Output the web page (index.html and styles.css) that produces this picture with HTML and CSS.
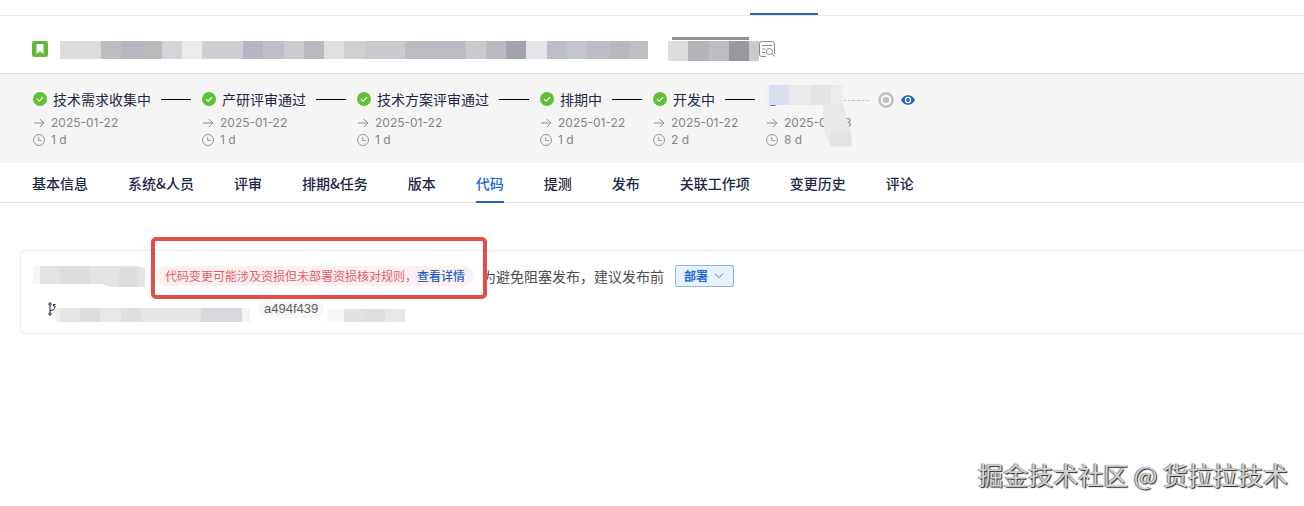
FILE: index.html
```html
<!DOCTYPE html>
<html lang="zh-CN">
  <head>
    <meta charset="UTF-8" />
    <meta name="viewport" content="width=device-width, initial-scale=1.0" />
    <title>代码</title>
    <link rel="stylesheet" href="styles.css">
  </head>
  <body>
    <svg class="sprite" aria-hidden="true">
      <symbol id="check" viewBox="0 0 14 14">
        <circle cx="7" cy="7" r="7" fill="#5fbf35" />
        <path d="M4 7.1l2.2 2.1L10 5.2" fill="none" stroke="#fff" stroke-width="1.2" />
      </symbol>
      <symbol id="arrow" viewBox="0 0 12 12">
        <path d="M1 6h9.6M6.8 1.9L10.8 6l-4 4.1" fill="none" stroke="#8c8c8c" />
      </symbol>
      <symbol id="clock" viewBox="0 0 12 12">
        <circle cx="6" cy="6" r="5.5" fill="none" stroke="#8c8c8c" stroke-width="0.9" />
        <path d="M5.7 3v3.5h3" fill="none" stroke="#8c8c8c" stroke-width="0.9" />
      </symbol>
    </svg>

    <div class="topbar"><span class="topbar-active"></span></div>

    <header class="header">
      <svg class="story-icon" viewBox="0 0 16 16">
        <rect width="16" height="16" rx="2" fill="#65b83c" />
        <path d="M4.5 3h7v10L8 10.6 4.5 13z" fill="#fff" />
      </svg>
      <div class="mosaic-title"></div>
      <div class="mosaic-status"></div>
      <svg class="search-icon" viewBox="0 0 16 16" fill="none" stroke="#8c8c8c">
        <path d="M7 15.500H2.500a2 2 0 0 1-2-2v-11a2 2 0 0 1 2-2h11a2 2 0 0 1 2 2V13M3 4.500h10M3 8h3.500M3 11.500h3" />
        <circle cx="10.500" cy="10.500" r="3" />
        <path d="M12.700 12.700l3 3" />
      </svg>
    </header>

    <section class="steps">
      <div class="step">
        <div class="step-title"><svg class="check"><use href="#check" /></svg><span>技术需求收集中</span><span class="step-line"></span></div>
        <div class="step-info"><svg><use href="#arrow" /></svg>2025-01-22</div>
        <div class="step-info"><svg><use href="#clock" /></svg>1 d</div>
      </div>
      <div class="step">
        <div class="step-title"><svg class="check"><use href="#check" /></svg><span>产研评审通过</span><span class="step-line"></span></div>
        <div class="step-info"><svg><use href="#arrow" /></svg>2025-01-22</div>
        <div class="step-info"><svg><use href="#clock" /></svg>1 d</div>
      </div>
      <div class="step">
        <div class="step-title"><svg class="check"><use href="#check" /></svg><span>技术方案评审通过</span><span class="step-line"></span></div>
        <div class="step-info"><svg><use href="#arrow" /></svg>2025-01-22</div>
        <div class="step-info"><svg><use href="#clock" /></svg>1 d</div>
      </div>
      <div class="step">
        <div class="step-title"><svg class="check"><use href="#check" /></svg><span>排期中</span><span class="step-line"></span></div>
        <div class="step-info"><svg><use href="#arrow" /></svg>2025-01-22</div>
        <div class="step-info"><svg><use href="#clock" /></svg>1 d</div>
      </div>
      <div class="step">
        <div class="step-title"><svg class="check"><use href="#check" /></svg><span>开发中</span><span class="step-line"></span></div>
        <div class="step-info"><svg><use href="#arrow" /></svg>2025-01-22</div>
        <div class="step-info"><svg><use href="#clock" /></svg>2 d</div>
      </div>
      <div class="step step-current">
        <div class="step-title"><span class="step-dot"></span></div>
        <div class="step-info"><svg><use href="#arrow" /></svg>2025-01-23</div>
        <div class="step-info"><svg><use href="#clock" /></svg>8 d</div>
        <svg class="step-mask" viewBox="0 0 92 64">
          <path d="M-4 2h84v20H-4z" fill="#f2f2f3" />
          <path d="M5 2h20v20H5z" fill="#d9def0" />
          <path d="M25 2h22v20H25z" fill="#e9eaec" />
          <path d="M47 2h20v20H47z" fill="#e2e3e4" />
          <path d="M67 2h11v20H67z" fill="#ebebeb" />
          <path d="M59 22h20l9 34v8H67l-7-16z" fill="#e8e8e9" />
          <path d="M67 48h19l2 14H67z" fill="#e2e2e3" />
        </svg>
      </div>
      <div class="step-end">
        <span class="step-dash"></span>
        <svg class="ring" viewBox="0 0 16 16">
          <circle cx="8" cy="8" r="6.600" fill="#fff" stroke="#bfc0c4" stroke-width="2.600" />
          <circle cx="8" cy="8" r="3.200" fill="#bfc0c4" />
        </svg>
        <svg class="eye" viewBox="0 0 14 10">
          <path d="M0 5C1.500 2 4 .3 7 .3S12.500 2 14 5C12.500 8 10 9.700 7 9.700S1.500 8 0 5z" fill="#2163c9" />
          <circle cx="7" cy="5" r="3.200" fill="#fff" />
          <circle cx="7" cy="5" r="1.900" fill="#2163c9" />
        </svg>
      </div>
    </section>

    <nav class="tabs">
      <a href="#">基本信息</a>
      <a href="#">系统&amp;人员</a>
      <a href="#">评审</a>
      <a href="#">排期&amp;任务</a>
      <a href="#">版本</a>
      <a href="#" class="active">代码</a>
      <a href="#">提测</a>
      <a href="#">发布</a>
      <a href="#">关联工作项</a>
      <a href="#">变更历史</a>
      <a href="#">评论</a>
    </nav>

    <main class="card">
      <div class="card-row">
        <svg class="mosaic-repo" viewBox="0 0 112 22">
          <path d="M0 1h7v18H0z" fill="#f7f7f7" />
          <path d="M7 1h97l8 2v19H80l-12-3H7z" fill="#e3e3e4" />
          <path d="M27 1h30v18H27zM86 3h18v19H86z" fill="#dcddde" />
        </svg>
        <div class="alert">
          代码变更可能涉及资损但未部署资损核对规则，<a href="#">查看详情</a>
          <span class="highlight"></span>
        </div>
        <span class="advice">为避免阻塞发布，建议发布前</span>
        <button class="deploy">
          <span>部署</span>
          <svg viewBox="0 0 10 6"><path d="M1 .7l4 4 4-4" fill="none" stroke="#3b7fdc" /></svg>
        </button>
      </div>
      <div class="card-row commit-row">
        <svg class="branch" viewBox="0 0 8 14" fill="none" stroke="#1c2747">
          <circle cx="2" cy="2" r="1.200" />
          <circle cx="2" cy="12" r="1.200" />
          <path d="M2 3.200v7.600M2 8.500c3 0 4.500-1 4.500-3M7.500 2.500h-2v1.500h1.500v1.500" />
        </svg>
        <div class="mosaic-branch"></div>
        <span class="hash">a494f439</span>
        <div class="mosaic-author"></div>
      </div>
    </main>

    <div class="watermark">掘金技术社区 @ 货拉拉技术</div>
  </body>
</html>
```
FILE: styles.css
```css
* {
  box-sizing: border-box;
}

body {
  margin: 0;
  min-height: 100vh;
  position: relative;
  overflow-x: hidden;
  background-color: #fff;
  color: #1c2747;
  font-family: "Noto Sans CJK SC", sans-serif;
  font-size: 14px;
}

svg {
  display: block;
  flex-shrink: 0;
}

a {
  text-decoration: none;
}

.sprite {
  display: none;
}

.topbar {
  display: flex;
  align-items: flex-end;
  height: 16px;
  padding-left: 750px;
  border-bottom: 1px solid #e6e6e6;
}

.topbar-active {
  width: 68px;
  height: 2px;
  background-color: #2e63b4;
}

/* header */
.header {
  display: flex;
  align-items: center;
  height: 58px;
  padding: 8px 32px 0;
  border-bottom: 1px solid #dedede;
}

.story-icon,
.search-icon {
  width: 16px;
  height: 16px;
}

.mosaic-title {
  width: 588px;
  height: 18px;
  margin: 2px 0 0 12px;
  background: linear-gradient(
    90deg,
    #dbdcdc 0 41px,
    #bcbdc1 0 61px,
    #b7b8bf 0 82px,
    #b7bbbc 0 102px,
    #d4d5d8 0 122px,
    #ebebec 0 142px,
    #cecfd2 0 183px,
    #b6b6c2 0 203px,
    #bfc0c7 0 224px,
    #cbccd0 0 244px,
    #b9bac0 0 264px,
    #e0e0e3 0 284px,
    #cfd0d2 0 305px,
    #c9cacd 0 345px,
    #bbbcc2 0 406px,
    #c9cacd 0 426px,
    #babbc1 0 446px,
    #a2a4ac 0 466px,
    #e4e5e8 0 487px,
    #bcbdc5 0 507px,
    #c1c6ca 0 527px,
    #bbbcc6 0 550px,
    #b8b9bf 0 570px,
    #c0c0c6 0
  );
}

.mosaic-status {
  width: 91px;
  height: 24px;
  margin-left: 20px;
  background:
    linear-gradient(#919193, #919193) 4px 0 / 77px 3px no-repeat,
    linear-gradient(#fff, #fff) 0 0 / 100% 4px no-repeat,
    linear-gradient(
      90deg,
      #dcdddf 0 20px,
      #b3b4b8 0 41px,
      #bcbdc3 0 61px,
      #98989f 0 81px,
      #c9cacb 0
    );
}

/* workflow steps */
.steps {
  display: flex;
  height: 89px;
  padding: 15px 33px 0;
  background-color: #f5f5f5;
}

.step {
  flex-shrink: 0;
}

.step-title {
  display: flex;
  align-items: center;
  height: 20px;
  margin-bottom: 5px;
  line-height: 20px;
  white-space: nowrap;
}

.check {
  width: 14px;
  height: 14px;
  margin-right: 6px;
}

.step-line {
  width: 30px;
  height: 1px;
  margin: 0 11px 0 10px;
  background-color: #000;
}

.step-info {
  display: flex;
  align-items: center;
  gap: 6px;
  height: 17px;
  color: #858585;
  font-family: Inter, sans-serif;
  font-size: 12px;
  white-space: nowrap;
}

.step-info svg {
  width: 12px;
  height: 12px;
}

.step-current {
  position: relative;
  width: 77px;
}

.step-dot {
  width: 14px;
  height: 14px;
  border-radius: 50%;
  background-color: #2163c9;
}

/* covers the name and part of the date */
.step-mask {
  position: absolute;
  top: -6px;
  left: -2px;
  width: 92px;
  height: 64px;
}

.step-current .step-info {
  width: 90px;
}

.step-end {
  display: flex;
  align-items: center;
  height: 22px;
}

.step-dash {
  width: 26px;
  border-top: 1px dashed #c4c4c4;
}

.ring {
  width: 16px;
  height: 16px;
  margin: 0 7px 0 9px;
}

.eye {
  width: 14px;
  height: 10px;
}

/* tabs */
.tabs {
  display: flex;
  gap: 40px;
  height: 40px;
  padding: 0 32px;
  border-bottom: 1px solid #dfdfdf;
}

.tabs a {
  height: 40px;
  line-height: 40px;
  color: #1c2747;
  font-weight: 500;
  white-space: nowrap;
}

.tabs .active {
  color: #2268d8;
  border-bottom: 2px solid #2e63b4;
}

/* code card */
.card {
  margin: 47px 0 0 20px;
  padding: 13px 12px 13px;
  border: 1px solid #ececec;
  border-right: none;
  border-radius: 4px 0 0 4px;
}

.card-row {
  display: flex;
  align-items: center;
  height: 24px;
  white-space: nowrap;
}

.mosaic-repo {
  width: 112px;
  height: 22px;
}

.alert {
  position: relative;
  height: 20px;
  margin-left: 11px;
  padding: 0 9px;
  border-radius: 10px;
  background-color: #fdf0f0;
  color: #e35d6a;
  font-size: 12px;
  line-height: 20px;
}

.alert a {
  color: #1f62c6;
  font-weight: 500;
}

.highlight {
  position: absolute;
  top: -29px;
  left: -5px;
  right: -13px;
  height: 62px;
  border: 4px solid #e34d48;
  border-radius: 5px;
  pointer-events: none;
}

.advice {
  margin-left: 8px;
  color: #4d4d4d;
  line-height: 24px;
}

.deploy {
  display: flex;
  align-items: center;
  gap: 6px;
  height: 22px;
  margin-left: 11px;
  padding: 0 9px 0 8px;
  border: 1px solid #8db8e8;
  border-radius: 2px;
  background-color: #e8f2fc;
  color: #2268d8;
  font-family: inherit;
  font-size: 12px;
  font-weight: 700;
  line-height: 20px;
  cursor: pointer;
}

.deploy svg {
  width: 10px;
  height: 6px;
}

.commit-row {
  height: 22px;
  margin-top: 10px;
  padding-left: 15px;
}

.branch {
  width: 8px;
  height: 14px;
}

.mosaic-branch {
  width: 194px;
  height: 14px;
  margin-top: 12px;
  background: linear-gradient(
    90deg,
    #efefef 0 4px,
    #e2e4e5 0 24px,
    #dbdcde 0 44px,
    #e7e7e8 0 65px,
    #dddfe1 0 85px,
    #e6e4e6 0 145px,
    #d8d9dc 0 186px,
    #f4f4f4 0
  );
}

.hash {
  margin-left: 8px;
  padding: 0 6px;
  border-radius: 9px;
  background-color: #f6f8f9;
  color: #5c5c5c;
  font-family: "Liberation Sans", sans-serif;
  font-size: 13px;
  line-height: 18px;
}

.mosaic-author {
  width: 78px;
  height: 13px;
  margin: 12px 0 0 3px;
  background: linear-gradient(
    90deg,
    #f7f7f7 0 17px,
    #e1e1e1 0 38px,
    #dedee0 0 58px,
    #e7e7e8 0
  );
}

.watermark {
  position: absolute;
  right: 16px;
  bottom: 14px;
  color: #d2d2d2;
  font-size: 25px;
  line-height: 36px;
  text-shadow: 1px 1px 1px #222, -1px 0 1px #777;
}
```
